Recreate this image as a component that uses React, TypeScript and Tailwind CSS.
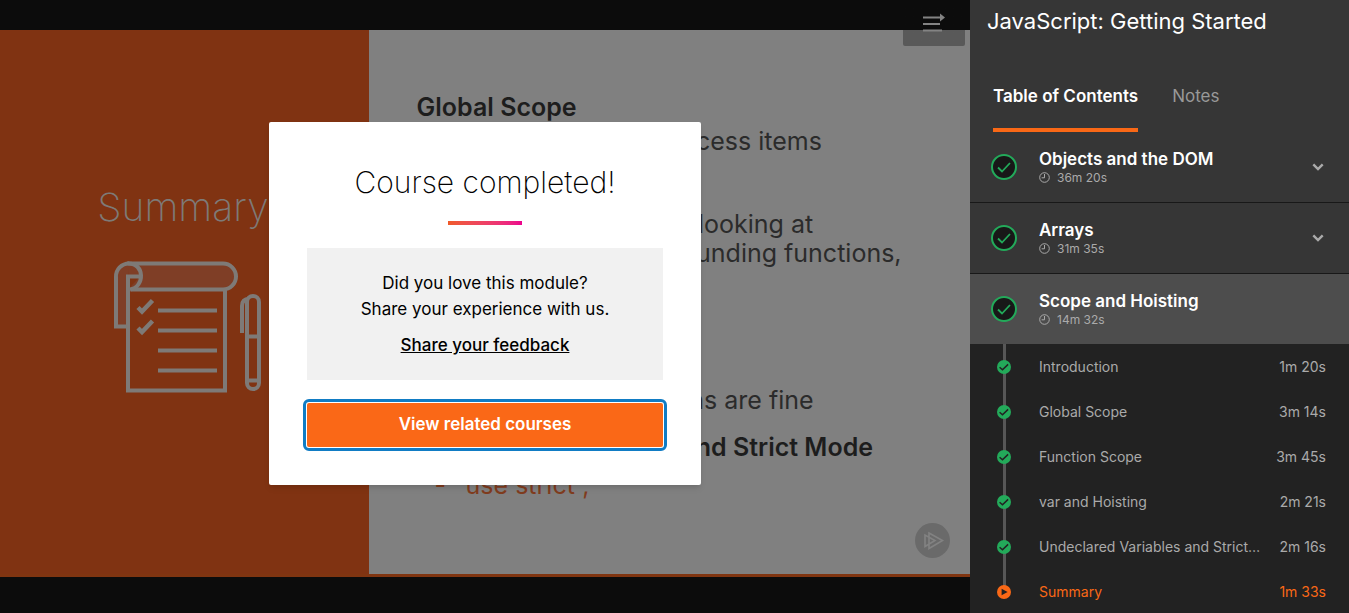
import type { ReactNode } from "react";

const modules = [
  { title: "Objects and the DOM", time: "36m 20s", open: false },
  { title: "Arrays", time: "31m 35s", open: false },
  { title: "Scope and Hoisting", time: "14m 32s", open: true },
];

const clips = [
  { title: "Introduction", time: "1m 20s" },
  { title: "Global Scope", time: "3m 14s" },
  { title: "Function Scope", time: "3m 45s" },
  { title: "var and Hoisting", time: "2m 21s" },
  { title: "Undeclared Variables and Strict Mode", time: "2m 16s" },
  { title: "Summary", time: "1m 33s", current: true },
];

function DoneBadge() {
  return (
    <svg className="size-[26px] shrink-0" viewBox="0 0 26 26" fill="none" aria-hidden="true">
      <circle cx="13" cy="13" r="12" fill="#181818" stroke="#23aa5a" strokeWidth="2" />
      <path d="M7 13.5l4 4 8-8.5" stroke="#23aa5a" strokeWidth="1.8" />
    </svg>
  );
}

function Clock() {
  return (
    <svg className="size-[11px]" viewBox="0 0 11 11" fill="none" stroke="#aaaaaa" aria-hidden="true">
      <circle cx="5.5" cy="5.5" r="4.8" />
      <path d="M5.5 2v3.8H2.6" />
    </svg>
  );
}

function ClipMark({ current }: { current?: boolean }) {
  return (
    <svg className="relative size-[14px] shrink-0" viewBox="0 0 14 14" fill="none" aria-hidden="true">
      <circle cx="7" cy="7" r="7" fill={current ? "#f96816" : "#23aa5a"} />
      {current ? (
        <path d="M4.6 3.8v6.4L10.6 7z" fill="#222222" />
      ) : (
        <path d="M2.6 7.2l2.9 2.6 5.6-5.4" stroke="#222222" strokeWidth="1.5" />
      )}
    </svg>
  );
}

function Checklist() {
  return (
    <svg className="h-[134px] w-[152px]" viewBox="0 0 152 134" fill="none" stroke="#7e7a77" strokeWidth="4" aria-hidden="true">
      <path d="M16 3.5H112a13 13 0 0 1 0 26H20" fill="#7f3e26" />
      <path d="M16 66.5H5V17A13 13 0 0 1 18 3.5" fill="#7f3e26" />
      <path d="M17 29.5V16.5H29" fill="#803312" />
      <path d="M17 16V130.5H114V29" />
      <path d="M17 3.5C34 3 34 27 19 29.5" />
      <path d="M27 47.5l4 4 10.5-11M27 68l4 4 10.5-11" strokeWidth="4.5" />
      <path d="M47 50.5H106M47 70.5H106M47 90.5H106M47 110.5H106" />
      <path d="M136 42a6 6 0 0 1 12 0V123a6 6 0 0 1-12 0Z" />
      <path d="M138 39c-5 0-7 3-7 7V73M136 76.5H148M136 120.5H148" />
    </svg>
  );
}

function SlideHeading({ children }: { children: ReactNode }) {
  return <h3 className="whitespace-nowrap leading-[30px] font-semibold text-[#1d1d1d]">{children}</h3>;
}

function Slide() {
  return (
    <div className="flex flex-1 overflow-hidden border-b-3 border-[#803511] bg-[#808080]">
      <div className="flex w-[38%] shrink-0 flex-col items-end bg-[#803312] pt-[154px] pr-[100px]">
        <h2 className="text-[39px] leading-[46px] font-extralight text-[#7e7a77]">Summary</h2>
        <div className="pt-[30px] pr-1.5">
          <Checklist />
        </div>
      </div>
      <div className="flex min-w-0 flex-1 flex-col pt-[62px] pl-12 text-[25px] leading-[29px] text-[#2b2b2b]">
        <SlideHeading>Global Scope</SlideHeading>
        <p className="pt-[5px] pl-[47px] whitespace-nowrap">All functions can access items</p>
        <p className="pt-[54px] pl-[47px] whitespace-nowrap">
          Resolves names by looking at
          <br />
          function, then surrounding functions,
        </p>
        <p className="pt-[118px] pl-[47px] whitespace-nowrap">Function declarations are fine</p>
        <div className="pt-[17px]">
          <SlideHeading>Undeclared Variables and Strict Mode</SlideHeading>
        </div>
        <p className="flex gap-3 pt-[9px] pl-[18px] text-[#803c1e]">
          <span>-</span>'use strict';
        </p>
      </div>
    </div>
  );
}

function CompletedDialog() {
  return (
    <section
      role="dialog"
      aria-labelledby="done-title"
      className="flex w-[432px] flex-col items-center rounded-xs bg-white px-[38px] pt-[42px] pb-[38px] text-black shadow-md"
    >
      <h1 id="done-title" className="text-3xl leading-9 font-extralight">
        Course completed!
      </h1>
      <div className="mt-[21px] h-1 w-[74px] bg-linear-to-r from-[#f05a28] to-[#ec008c]" />
      <div className="mt-[23px] flex w-full flex-col items-center bg-[#f1f1f1] pt-[22px] pb-[22px] text-center text-[17px] leading-[26px]">
        <p>
          Did you love this module?
          <br />
          Share your experience with us.
        </p>
        <a href="#feedback" className="mt-[10px] font-medium underline">
          Share your feedback
        </a>
      </div>
      <button className="mt-[23px] h-11 w-full rounded-xs bg-[#fa6817] text-[17px] font-semibold text-white outline-3 outline-offset-1 outline-[#117cc4]">
        View related courses
      </button>
    </section>
  );
}

export default function App() {
  return (
    <div className="flex h-screen overflow-hidden bg-[#222222] font-['Inter',sans-serif]">
      <main className="relative flex min-w-0 flex-1 flex-col bg-[#0c0c0c] pt-[30px] pb-9">
        <Slide />
        <button
          aria-label="Collapse table of contents"
          className="absolute top-0 right-[5px] flex h-[46px] w-[62px] justify-center rounded-b-xs bg-linear-to-b from-[#0c0c0c] from-65% to-[#595959] to-65% pt-3"
        >
          <svg className="h-5 w-[22px]" viewBox="0 0 22 20" fill="none" stroke="#838383" strokeWidth="2" aria-hidden="true">
            <path d="M0 5.5H18M0 12H17M0 18.5H19" />
            <path d="M17 1.5L22 5.5L17 9.5z" fill="#838383" stroke="none" />
          </svg>
        </button>
        <svg className="absolute right-5 bottom-[55px] size-[35px]" viewBox="0 0 35 35" fill="none" stroke="#828282" strokeWidth="1.6" aria-hidden="true">
          <circle cx="17.5" cy="17.5" r="17.5" fill="#6a6a6a" stroke="none" />
          <path d="M14 10L27.5 17.5L14 25.5zM10 12V23.5L20 17.5z" />
        </svg>
        <div className="absolute inset-0 flex items-center justify-center pb-1.5">
          <CompletedDialog />
        </div>
      </main>
      <aside className="flex w-[379px] shrink-0 flex-col bg-[#363636]">
        <h2 className="pt-[7px] pl-[17px] text-[22px] leading-7 text-white">JavaScript: Getting Started</h2>
        <div role="tablist" className="mt-[45px] flex gap-[34px] pl-[23px] text-[17px] leading-8">
          <button role="tab" aria-selected="true" className="h-[52px] border-b-4 border-[#f96816] pb-4 font-semibold text-white">
            Table of Contents
          </button>
          <button role="tab" aria-selected="false" className="h-[52px] pb-5 text-[#999999]">
            Notes
          </button>
        </div>
        <div>
          {modules.map((m) => (
            <button
              key={m.title}
              aria-expanded={m.open}
              className={
                m.open
                  ? "flex h-[70px] w-full items-center bg-[#4d4d4d] pr-[25px] pl-[21px] text-left"
                  : "flex h-[71px] w-full items-center border-b border-[#181818] pr-[25px] pl-[21px] text-left"
              }
            >
              <DoneBadge />
              <span className="flex flex-1 flex-col pt-px pl-[22px]">
                <span className="text-[17px] leading-5 font-semibold text-white">{m.title}</span>
                <span className="flex items-center gap-[7px] text-xs leading-[18px] text-[#aaaaaa]">
                  <Clock />
                  {m.time}
                </span>
              </span>
              {!m.open && (
                <svg className="h-2 w-3" viewBox="0 0 12 8" fill="none" stroke="#aaaaaa" strokeWidth="2.4" aria-hidden="true">
                  <path d="M1.3 1.3L6 6L10.7 1.3" />
                </svg>
              )}
            </button>
          ))}
        </div>
        <ul className="flex-1 overflow-hidden bg-[#222222] text-sm leading-[45px] text-[#aaaaaa]">
          {clips.map((c) => (
            <li key={c.title} className="relative">
              <span className={c.current ? "absolute top-0 left-[33px] h-6 w-[3px] bg-[#575757]" : "absolute top-0 left-[33px] h-full w-[3px] bg-[#575757]"} />
              <a
                href="#clip"
                className={c.current ? "flex h-[45px] items-center pr-[23px] pl-[27px] text-[#f96816]" : "flex h-[45px] items-center pr-[23px] pl-[27px]"}
              >
                <ClipMark current={c.current} />
                <span className="ml-7 w-56 truncate">{c.title}</span>
                <span className="flex-1 text-right whitespace-nowrap">{c.time}</span>
              </a>
            </li>
          ))}
        </ul>
      </aside>
    </div>
  );
}
